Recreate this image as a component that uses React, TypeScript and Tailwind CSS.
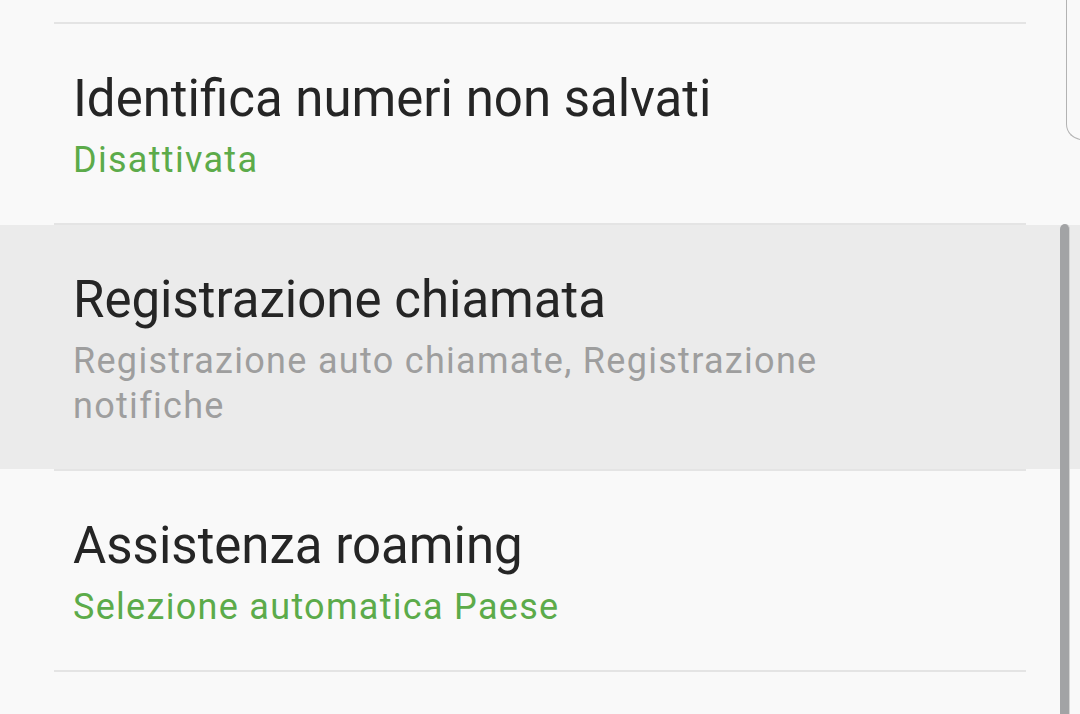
const ROWS = [
	{ title: "Identifica numeri non salvati", sub: "Disattivata", tone: "green" },
	{
		title: "Registrazione chiamata",
		sub: "Registrazione auto chiamate, Registrazione notifiche",
		tone: "grey",
		active: true,
	},
	{ title: "Assistenza roaming", sub: "Selezione automatica Paese", tone: "green" },
];

function Divider() {
	return <div className="mx-[54px] h-[2px] bg-[#e4e4e4]" />;
}

function Row({ title, sub, tone, active }: { title: string; sub: string; tone: string; active?: boolean }) {
	return (
		<div className={active ? "bg-[#ebebeb]" : ""}>
			<div className="mx-[54px] pl-[19px] pr-24 pt-[45px] pb-[40px]">
				<div className="text-[51px] leading-[60px] text-[#252525]">{title}</div>
				<div
					className={
						"mt-[9px] text-[36px] leading-[45px] tracking-[1.3px] " +
						(tone === "green" ? "text-[#5cab4a]" : "text-[#9e9e9e]")
					}
				>
					{sub}
				</div>
			</div>
		</div>
	);
}

export default function App() {
	return (
		<div className="relative h-[714px] w-[1080px] overflow-hidden bg-[#f9f9f9] font-['Roboto',sans-serif]">
			<div className="h-[22px]" />
			<Divider />
			{ROWS.map((row) => (
				<div key={row.title}>
					<Row {...row} />
					<Divider />
				</div>
			))}

			{/* card edge top-right */}
			<div className="absolute left-[1066px] top-[-20px] h-[160px] w-[40px] rounded-bl-[16px] border-b-[1.5px] border-l-[1.5px] border-[#b3b3b3]" />

			{/* scrollbar */}
			<div className="absolute left-[1060px] top-[224px] bottom-0 w-[10px] rounded-t-full border-r border-[#d4d4d4] bg-[#a2a3a5]" />
		</div>
	);
}
